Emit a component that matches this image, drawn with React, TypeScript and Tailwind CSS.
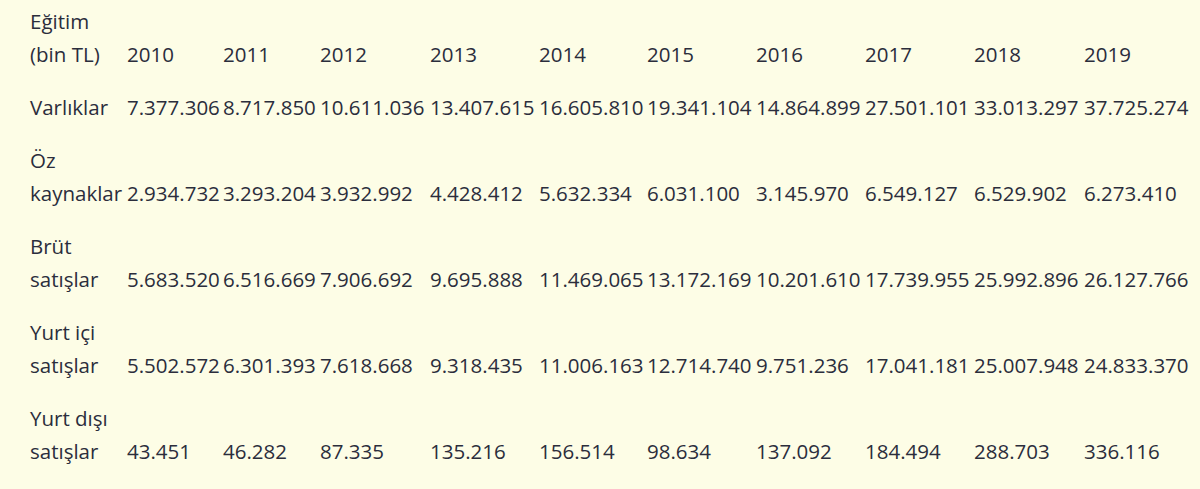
import React from "react";

type Row = {
  label: [string, string?];
  values: string[];
};

const years = ["2010", "2011", "2012", "2013", "2014", "2015", "2016", "2017", "2018", "2019"];

const rows: Row[] = [
  {
    label: ["Varlıklar"],
    values: ["7.377.306", "8.717.850", "10.611.036", "13.407.615", "16.605.810", "19.341.104", "14.864.899", "27.501.101", "33.013.297", "37.725.274"],
  },
  {
    label: ["Öz", "kaynaklar"],
    values: ["2.934.732", "3.293.204", "3.932.992", "4.428.412", "5.632.334", "6.031.100", "3.145.970", "6.549.127", "6.529.902", "6.273.410"],
  },
  {
    label: ["Brüt", "satışlar"],
    values: ["5.683.520", "6.516.669", "7.906.692", "9.695.888", "11.469.065", "13.172.169", "10.201.610", "17.739.955", "25.992.896", "26.127.766"],
  },
  {
    label: ["Yurt içi", "satışlar"],
    values: ["5.502.572", "6.301.393", "7.618.668", "9.318.435", "11.006.163", "12.714.740", "9.751.236", "17.041.181", "25.007.948", "24.833.370"],
  },
  {
    label: ["Yurt dışı", "satışlar"],
    values: ["43.451", "46.282", "87.335", "135.216", "156.514", "98.634", "137.092", "184.494", "288.703", "336.116"],
  },
];

const App: React.FC = () => {
  return (
    <div className="w-[1200px] h-[489px] overflow-hidden bg-[#fdfde6] pl-[30px] text-[#2b2d3c] text-[20.5px] leading-[33px] font-['Open_Sans',sans-serif]">
      <table className="table-fixed border-collapse -mt-[5px]">
        <colgroup>
          <col className="w-[97px]" />
          <col className="w-[96px]" />
          <col className="w-[97px]" />
          <col className="w-[110px]" />
          <col className="w-[109px]" />
          <col className="w-[108px]" />
          <col className="w-[109px]" />
          <col className="w-[109px]" />
          <col className="w-[109px]" />
          <col className="w-[110px]" />
          <col className="w-[110px]" />
        </colgroup>
        <tbody>
          <tr>
            <td className="p-0 py-[10px] align-bottom whitespace-nowrap">
              Eğitim
              <br />
              (bin TL)
            </td>
            {years.map((y) => (
              <td key={y} className="p-0 py-[10px] align-bottom whitespace-nowrap">
                {y}
              </td>
            ))}
          </tr>
          {rows.map((row) => (
            <tr key={row.label.join(" ")}>
              <td className="p-0 py-[10px] align-bottom whitespace-nowrap">
                {row.label[0]}
                {row.label[1] && (
                  <>
                    <br />
                    {row.label[1]}
                  </>
                )}
              </td>
              {row.values.map((v, i) => (
                <td key={i} className="p-0 py-[10px] align-bottom whitespace-nowrap">
                  {v}
                </td>
              ))}
            </tr>
          ))}
        </tbody>
      </table>
    </div>
  );
};

export default App;
